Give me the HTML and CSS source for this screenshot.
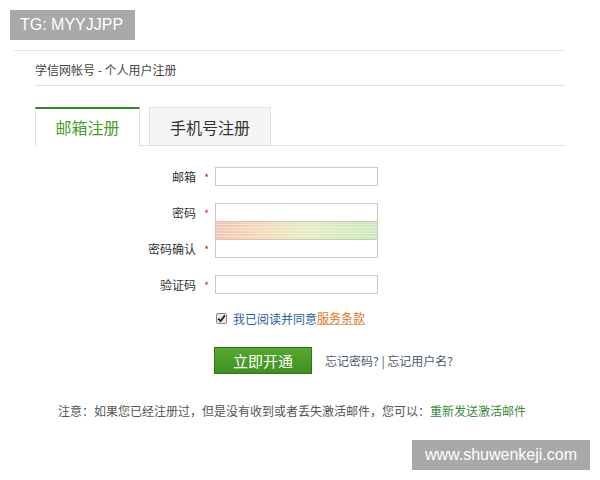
FILE: index.html
```html
<!DOCTYPE html>
<html lang="zh-CN">
<head>
<meta charset="utf-8">
<title>学信网帐号 - 个人用户注册</title>
<link rel="stylesheet" href="styles.css">
</head>
<body>
<div class="badge badge-tg">TG: MYYJJPP</div>
<div class="page">
  <div class="inner">
    <div class="crumb">学信网帐号 - 个人用户注册</div>
    <div class="tabs">
      <div class="tab tab-active">邮箱注册</div>
      <div class="tab tab-off">手机号注册</div>
    </div>
    <div class="form">
      <div class="row">
        <span class="label">邮箱</span><span class="star">*</span><span class="input"></span>
      </div>
      <div class="row row-pw">
        <div class="pw-labels">
          <div class="pw-label"><span class="label">密码</span><span class="star">*</span></div>
          <div class="pw-label"><span class="label">密码确认</span><span class="star">*</span></div>
        </div>
        <div class="pw-fields">
          <span class="input"></span>
          <span class="strength"></span>
          <span class="input"></span>
        </div>
      </div>
      <div class="row">
        <span class="label">验证码</span><span class="star">*</span><span class="input"></span>
      </div>
      <div class="agree">
        <span class="check"><svg width="9" height="9" viewBox="0 0 9 9"><path d="M1.2 4.6 L3.6 7.2 L7.9 1.4" fill="none" stroke="#222" stroke-width="1.8"/></svg></span>
        <span class="agree-text">我已阅读并同意</span><span class="terms">服务条款</span>
      </div>
      <div class="actions">
        <span class="btn">立即开通</span>
        <span class="links">忘记密码? | 忘记用户名?</span>
      </div>
    </div>
    <div class="notice">注意：如果您已经注册过，但是没有收到或者丢失激活邮件，您可以：<span class="resend">重新发送激活邮件</span></div>
  </div>
</div>
<div class="badge badge-site">www.shuwenkeji.com</div>
</body>
</html>
```
FILE: styles.css
```css
html, body {
  margin: 0;
  padding: 0;
  background: #fff;
  width: 600px;
  height: 480px;
  overflow: hidden;
  font-family: "Noto Sans CJK SC", "Liberation Sans", sans-serif;
  color: #333;
}
.badge {
  position: absolute;
  background: #a9a9a9;
  color: #fff;
  font-family: "Liberation Sans", Arial, sans-serif;
  font-size: 16px;
  line-height: 30px;
  height: 30px;
}
.badge-tg {
  top: 10px;
  left: 10px;
  width: 115px;
  padding-left: 10px;
}
.badge-site {
  top: 440px;
  left: 412px;
  width: 178px;
  text-align: center;
}
.page {
  margin: 50px 0 0 14px;
  width: 551px;
  border-top: 1px solid #e6e6e6;
}
.inner {
  padding-left: 21px;
}
.crumb {
  height: 34px;
  line-height: 38px;
  font-size: 12px;
  color: #444;
  border-bottom: 1px solid #e0e0e0;
}
.tabs {
  display: flex;
  margin-top: 21px;
  height: 38px;
  border-bottom: 1px solid #e0e0e0;
}
.tab {
  box-sizing: border-box;
  height: 39px;
  font-size: 16px;
  text-align: center;
  line-height: 36px;
}
.tab-active {
  width: 105px;
  border-top: 2px solid #2f8a23;
  border-left: 1px solid #e0e0e0;
  border-right: 1px solid #e0e0e0;
  background: #fff;
  color: #46a02c;
}
.tab-off {
  width: 122px;
  margin-left: 9px;
  height: 38px;
  border: 1px solid #e0e0e0;
  border-bottom: none;
  background: #f5f5f5;
  color: #333;
  line-height: 38px;
}
.form {
  padding-top: 21px;
}
.row {
  display: flex;
  align-items: center;
  margin-bottom: 17px;
}
.label {
  width: 161px;
  text-align: right;
  font-size: 12px;
  color: #333;
}
.star {
  width: 19px;
  text-align: center;
  color: #c8383a;
  font-size: 11px;
  padding-left: 2px;
  box-sizing: border-box;
}
.input {
  display: block;
  box-sizing: border-box;
  width: 163px;
  height: 19px;
  border: 1px solid #c9c9c9;
  background: #fff;
}
.row-pw {
  align-items: stretch;
}
.pw-labels {
  display: flex;
  flex-direction: column;
  justify-content: space-between;
}
.pw-label {
  display: flex;
  align-items: center;
  height: 19px;
}
.pw-fields {
  display: flex;
  flex-direction: column;
}
.strength {
  display: block;
  box-sizing: border-box;
  width: 163px;
  height: 17px;
  border-left: 1px solid #c9c9c9;
  border-right: 1px solid #c9c9c9;
  background:
    repeating-linear-gradient(to bottom, rgba(255,255,255,0) 0, rgba(255,255,255,0) 2px, rgba(255,255,255,0.35) 2px, rgba(255,255,255,0.35) 3px),
    linear-gradient(to right, #f6c6b4 0%, #f3dcb6 30%, #e8ecc0 55%, #d3ebbf 80%, #cde9b9 100%);
}
.agree {
  display: flex;
  align-items: center;
  margin-left: 181px;
  margin-top: 3px;
  height: 14px;
  font-size: 12px;
}
.check {
  display: flex;
  align-items: center;
  justify-content: center;
  box-sizing: border-box;
  width: 11px;
  height: 11px;
  border: 1px solid #8a8a8a;
  border-radius: 2px;
  background: #e8e8e8;
  margin-right: 6px;
}
.agree-text {
  color: #2d5e9e;
}
.terms {
  color: #e0761f;
  border-bottom: 1px solid #e9a060;
  line-height: 13px;
}
.actions {
  display: flex;
  align-items: center;
  margin-left: 179px;
  margin-top: 22px;
}
.btn {
  display: block;
  box-sizing: border-box;
  width: 98px;
  height: 27px;
  line-height: 25px;
  text-align: center;
  background: linear-gradient(to bottom, #56a82f, #3e9120);
  border: 1px solid #2f7517;
  color: #fff;
  font-size: 15px;
}
.links {
  margin-left: 13px;
  font-size: 12px;
  color: #4f5d6c;
}
.notice {
  margin-top: 28px;
  padding-left: 23px;
  font-size: 12px;
  color: #555;
}
.resend {
  color: #3a8a3a;
}
```
